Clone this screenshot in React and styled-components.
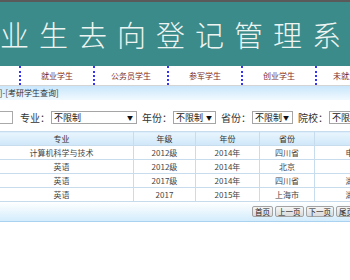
import React from 'react';
import styled, { createGlobalStyle } from 'styled-components';

const GlobalStyle = createGlobalStyle`
  html, body {
    margin: 0;
    padding: 0;
    background: #fff;
    overflow: hidden;
  }
  body {
    font-family: "Noto Sans CJK SC", "Liberation Sans", sans-serif;
    color: #333;
  }
`;

// the page is wider than the window and scrolled a little to the right
const Page = styled.div`
  width: 1000px;
  margin-left: -60px;
`;

const Header = styled.div`
  height: 64px;
  border-top: 2px solid #5a5a5a;
  background: #3a8b8a;
  display: flex;
  align-items: center;
  padding-left: 21px;
`;

const Title = styled.h1`
  margin: 0;
  font-size: 29px;
  font-weight: 300;
  letter-spacing: 10px;
  color: #eef4f2;
  white-space: nowrap;
`;

const Nav = styled.ul`
  display: flex;
  margin: 0;
  padding: 0 0 0 7px;
  height: 19px;
  list-style: none;
  border-bottom: 1px solid #d4d4d4;
`;

const NavItem = styled.li`
  width: 72px;
  border-right: 2px dotted #3434f2;
  display: flex;
  align-items: center;
  justify-content: center;
  font-size: 8px;
  color: #7b2e2e;
`;

const Crumb = styled.div`
  height: 14px;
  line-height: 14px;
  padding-left: 41px;
  font-size: 8px;
  color: #333;
  background: linear-gradient(#c9e6fb, #f1f9ff);
`;

const SearchRow = styled.div`
  display: flex;
  align-items: center;
  height: 27px;
  padding-top: 4px;
`;

const Label = styled.span`
  font-size: 10px;
  color: #333;
  margin: 0 1px 0 ${(p) => p.$ml ?? 5}px;
  white-space: nowrap;
`;

const Input = styled.div`
  width: 40px;
  height: 11px;
  border: 1px solid #a9a9a9;
`;

const Select = styled.div`
  width: ${(p) => p.$w}px;
  height: 13px;
  box-sizing: border-box;
  border: 1px solid #a5a5a5;
  display: flex;
  align-items: center;
  justify-content: space-between;
  padding: 0 3px 0 2px;
  font-size: 9px;
  color: #222;
  white-space: nowrap;
  overflow: hidden;
  &::after {
    content: '▼';
    font-size: 6px;
    color: #111;
  }
`;

const Table = styled.table`
  border-collapse: collapse;
  table-layout: fixed;
  width: 600px;
  font-size: 8px;
  color: #444;
  td, th {
    height: 13px;
    padding: 0;
    border: 1px solid #c7dcec;
    text-align: center;
    font-weight: normal;
    white-space: nowrap;
    overflow: hidden;
  }
  th {
    color: #333;
    background: linear-gradient(#e9f5fd, #cfe7f9);
  }
`;

const Pager = styled.div`
  display: flex;
  align-items: center;
  gap: 2px;
  height: 19px;
  padding-left: 312px;
  border-bottom: 1px solid #a8d2ef;
  background: linear-gradient(#ffffff, #d3ecfc);
  box-shadow: 0 2px 4px rgba(0, 0, 0, 0.05);
`;

const PageButton = styled.button`
  height: 11px;
  padding: 0 2px;
  border: 1px solid #a3a3a3;
  border-radius: 2px;
  background: linear-gradient(#f6f6f6, #dadada);
  font-family: inherit;
  font-size: 7.5px;
  line-height: 9px;
  color: #222;
`;

const columns = [
  { title: '序号', width: 49 },
  { title: '专业', width: 144 },
  { title: '年级', width: 62 },
  { title: '年份', width: 64 },
  { title: '省份', width: 55 },
  { title: '院校', width: 110 },
  { title: '操作', width: 116 },
];

const rows = [
  ['1', '计算机科学与技术', '2012级', '2014年', '四川省', '电子科技大学', '查看'],
  ['2', '英语', '2012级', '2014年', '北京', '北京大学', '查看'],
  ['3', '英语', '2017级', '2014年', '四川省', '湖南师范大学', '查看'],
  ['4', '英语', '2017', '2015年', '上海市', '湖北工业大学', '查看'],
];

const navs = ['考研学生', '就业学生', '公务员学生', '参军学生', '创业学生', '未就业学生'];

export default function App() {
  return (
    <Page>
      <GlobalStyle />
      <Header>
        <Title>毕业生去向登记管理系统</Title>
      </Header>
      <Nav>
        {navs.map((n) => (
          <NavItem key={n}>{n}</NavItem>
        ))}
      </Nav>
      <Crumb>[首页]-[考研学生查询]</Crumb>
      <SearchRow>
        <Label $ml={0}>姓名：</Label>
        <Input />
        <Label $ml={7}>专业：</Label>
        <Select $w={86}>不限制</Select>
        <Label>年份：</Label>
        <Select $w={43}>不限制</Select>
        <Label>省份：</Label>
        <Select $w={41}>不限制</Select>
        <Label>院校：</Label>
        <Select $w={60}>不限制</Select>
      </SearchRow>
      <Table>
        <colgroup>
          {columns.map((c) => (
            <col key={c.title} style={{ width: c.width }} />
          ))}
        </colgroup>
        <thead>
          <tr>
            {columns.map((c) => (
              <th key={c.title}>{c.title}</th>
            ))}
          </tr>
        </thead>
        <tbody>
          {rows.map((r) => (
            <tr key={r[0]}>
              {r.map((cell, i) => (
                <td key={i}>{cell}</td>
              ))}
            </tr>
          ))}
        </tbody>
      </Table>
      <Pager>
        <PageButton>首页</PageButton>
        <PageButton>上一页</PageButton>
        <PageButton>下一页</PageButton>
        <PageButton>尾页</PageButton>
      </Pager>
    </Page>
  );
}
